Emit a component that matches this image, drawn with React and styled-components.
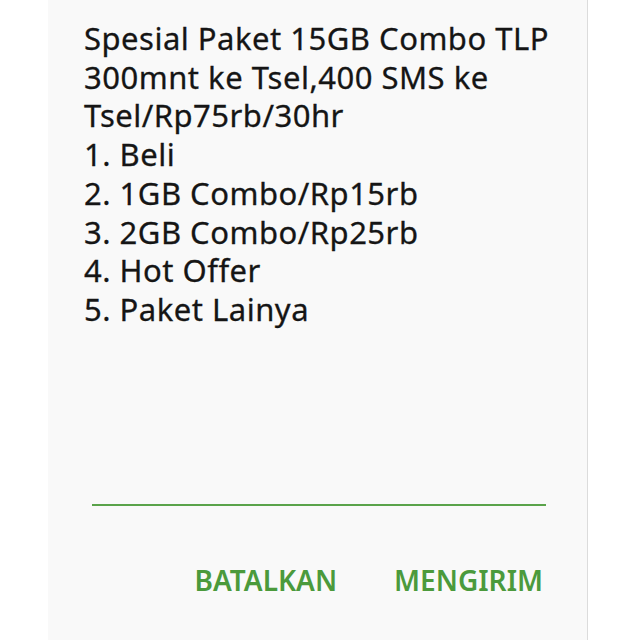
import React from 'react';
import styled, { createGlobalStyle } from 'styled-components';

const Global = createGlobalStyle`
	html, body {
		margin: 0;
		padding: 0;
		background: #ffffff;
	}
`;

const Page = styled.div`
	width: 640px;
	height: 640px;
	display: flex;
	padding-left: 48px;
	box-sizing: border-box;
	overflow: hidden;
`;

const Dialog = styled.div`
	width: 540px;
	height: 100%;
	background: #f9f9f9;
	border-right: 1px solid #dcdcdc;
	box-sizing: border-box;
	display: flex;
	flex-direction: column;
`;

const Message = styled.div`
	padding: 19px 20px 0 36px;
	font-family: 'Noto Sans', 'Open Sans', sans-serif;
	font-size: 31px;
	line-height: 38.7px;
	color: #151515;
	letter-spacing: 0.5px;
	-webkit-text-stroke: 0.3px #151515;
`;

const Line = styled.div`
	white-space: nowrap;
`;

const Input = styled.div`
	margin: auto 41px 0 44px;
	height: 2px;
	background: #5aa34a;
`;

const Actions = styled.div`
	display: flex;
	justify-content: flex-end;
	gap: 57px;
	padding: 0 44px 0 0;
	margin: 58px 0 44px;
`;

const Button = styled.div`
	font-family: 'Noto Sans', 'Open Sans', sans-serif;
	font-size: 28px;
	font-weight: 600;
	line-height: 32px;
	color: #4b9a3c;
	letter-spacing: 0px;
`;

const lines = [
	'Spesial Paket 15GB Combo TLP',
	'300mnt ke Tsel,400 SMS ke',
	'Tsel/Rp75rb/30hr',
	'1. Beli',
	'2. 1GB Combo/Rp15rb',
	'3. 2GB Combo/Rp25rb',
	'4. Hot Offer',
	'5. Paket Lainya',
];

const App = () => {
	return (
		<>
			<Global />
			<Page>
				<Dialog>
					<Message>
						{lines.map((l) => (
							<Line key={l}>{l}</Line>
						))}
					</Message>
					<Input />
					<Actions>
						<Button>BATALKAN</Button>
						<Button>MENGIRIM</Button>
					</Actions>
				</Dialog>
			</Page>
		</>
	);
};

export default App;
